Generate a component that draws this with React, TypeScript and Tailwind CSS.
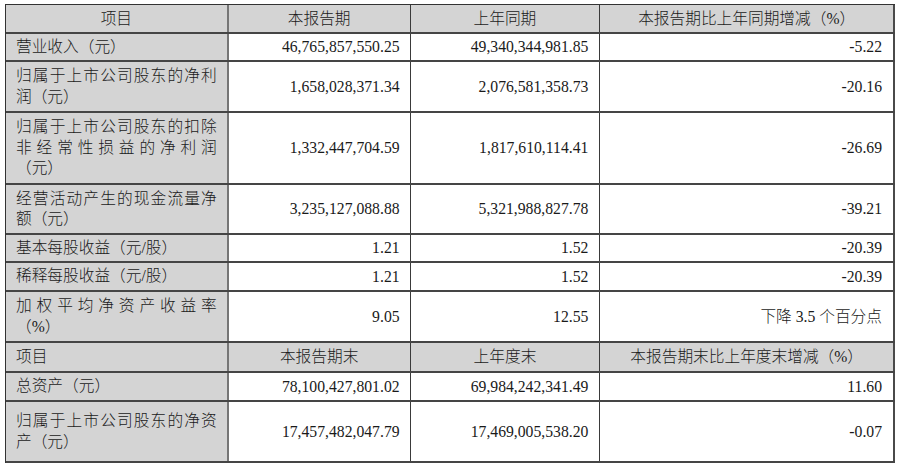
const H = '项目';

type Row =
  | { kind: 'head'; cells: string[]; leftFirst?: boolean; h: string }
  | { kind: 'data'; label: string[]; values: string[]; h: string };

const rows: Row[] = [
  { kind: 'head', cells: [H, '本报告期', '上年同期', '本报告期比上年同期增减（%）'], h: 'h-[29px]' },
  { kind: 'data', label: ['营业收入（元）'], values: ['46,765,857,550.25', '49,340,344,981.85', '-5.22'], h: 'h-[28px]' },
  { kind: 'data', label: ['归属于上市公司股东的净利', '润（元）'], values: ['1,658,028,371.34', '2,076,581,358.73', '-20.16'], h: 'h-[51px]' },
  {
    kind: 'data',
    label: ['归属于上市公司股东的扣除', '非经常性损益的净利润', '（元）'],
    values: ['1,332,447,704.59', '1,817,610,114.41', '-26.69'],
    h: 'h-[72px]',
  },
  { kind: 'data', label: ['经营活动产生的现金流量净', '额（元）'], values: ['3,235,127,088.88', '5,321,988,827.78', '-39.21'], h: 'h-[50px]' },
  { kind: 'data', label: ['基本每股收益（元/股）'], values: ['1.21', '1.52', '-20.39'], h: 'h-[28px]' },
  { kind: 'data', label: ['稀释每股收益（元/股）'], values: ['1.21', '1.52', '-20.39'], h: 'h-[29px]' },
  { kind: 'data', label: ['加权平均净资产收益率', '（%）'], values: ['9.05', '12.55', '下降 3.5 个百分点'], h: 'h-[51px]' },
  { kind: 'head', cells: [H, '本报告期末', '上年度末', '本报告期末比上年度末增减（%）'], leftFirst: true, h: 'h-[30px]' },
  { kind: 'data', label: ['总资产（元）'], values: ['78,100,427,801.02', '69,984,242,341.49', '11.60'], h: 'h-[29px]' },
  { kind: 'data', label: ['归属于上市公司股东的净资', '产（元）'], values: ['17,457,482,047.79', '17,469,005,538.20', '-0.07'], h: 'h-[61px]' },
];

// 列宽：223 / 182 / 190 / 295
const colW = ['w-[223px]', 'w-[182px]', 'w-[190px]', 'w-[295px]'];
const colBorder = [
  'border-r-2 border-r-[#767676]',
  'border-r border-r-[#3a3a3a]',
  'border-r border-r-[#3a3a3a]',
  'border-r-2 border-r-[#4a4a4a]',
];
const valuePad = ['pr-[10px]', 'pr-[11px]', 'pr-[11px]'];

function LabelCell({ lines }: { lines: string[] }) {
  return (
    <div className={`${colW[0]} ${colBorder[0]} flex flex-col justify-center bg-[#d4d4d4] pl-[10px] pr-[10px]`}>
      {lines.map((line, i) => {
        // 多行时除最后一行外两端对齐
        const justify = lines.length > 1 && i < lines.length - 1;
        return (
          <div
            key={i}
            className={justify ? 'text-justify [text-align-last:justify] leading-[20.5px]' : 'leading-[20.5px]'}
          >
            {line}
          </div>
        );
      })}
    </div>
  );
}

export default function App() {
  return (
    <div
      lang="zh-CN"
      className="w-[900px] h-[469px] bg-white pt-[4px] pl-[5px] text-[15.7px] font-light text-[#1a1a1a] font-['Liberation_Serif','Noto_Sans_CJK_SC',serif]"
    >
      <div className="w-[890px] border-t border-l border-[#333]">
        {rows.map((row, ri) => {
          const rowCls = `flex ${row.h} border-b-2 border-b-[#454545]`;
          if (row.kind === 'head') {
            return (
              <div key={ri} className={`${rowCls} bg-[#d4d4d4]`}>
                {row.cells.map((c, ci) => (
                  <div
                    key={ci}
                    className={`${colW[ci]} ${colBorder[ci]} flex items-center leading-[20px] ${
                      ci === 0 && row.leftFirst ? 'justify-start pl-[10px]' : 'justify-center'
                    }`}
                  >
                    {c}
                  </div>
                ))}
              </div>
            );
          }
          return (
            <div key={ri} className={rowCls}>
              <LabelCell lines={row.label} />
              {row.values.map((v, vi) => (
                <div
                  key={vi}
                  className={`${colW[vi + 1]} ${colBorder[vi + 1]} ${valuePad[vi]} flex items-center justify-end leading-[20px] whitespace-nowrap`}
                >
                  {v}
                </div>
              ))}
            </div>
          );
        })}
      </div>
    </div>
  );
}
